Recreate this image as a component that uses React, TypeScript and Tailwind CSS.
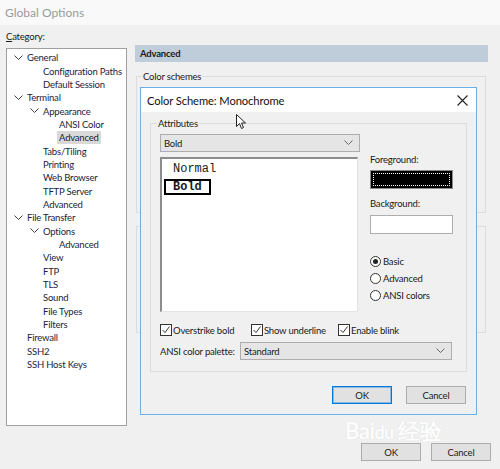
import React from "react";

type Item = { label: string; level: 0 | 1 | 2; exp?: boolean; sel?: boolean };

const tree: Item[] = [
  { label: "General", level: 0, exp: true },
  { label: "Configuration Paths", level: 1 },
  { label: "Default Session", level: 1 },
  { label: "Terminal", level: 0, exp: true },
  { label: "Appearance", level: 1, exp: true },
  { label: "ANSI Color", level: 2 },
  { label: "Advanced", level: 2, sel: true },
  { label: "Tabs/Tiling", level: 1 },
  { label: "Printing", level: 1 },
  { label: "Web Browser", level: 1 },
  { label: "TFTP Server", level: 1 },
  { label: "Advanced", level: 1 },
  { label: "File Transfer", level: 0, exp: true },
  { label: "Options", level: 1, exp: true },
  { label: "Advanced", level: 2 },
  { label: "View", level: 1 },
  { label: "FTP", level: 1 },
  { label: "TLS", level: 1 },
  { label: "Sound", level: 1 },
  { label: "File Types", level: 1 },
  { label: "Filters", level: 1 },
  { label: "Firewall", level: 0 },
  { label: "SSH2", level: 0 },
  { label: "SSH Host Keys", level: 0 },
];

const indent = ["pl-[7px]", "pl-[23px]", "pl-[39px]"];

function Chevron({ className = "", color = "#444" }: { className?: string; color?: string }) {
  return (
    <svg width="9" height="6" viewBox="0 0 9 6" className={`shrink-0 ${className}`}>
      <polyline points="0.5,0.5 4.5,4.5 8.5,0.5" fill="none" stroke={color} strokeWidth="1" />
    </svg>
  );
}

function Check({ label }: { label: string }) {
  return (
    <div className="flex items-center gap-[1px] whitespace-nowrap">
      <div className="w-[12px] h-[12px] shrink-0 bg-white border border-[#333] flex items-center justify-center">
        <svg width="10" height="10" viewBox="0 0 10 10">
          <polyline points="1.5,5 4,7.5 8.5,1.5" fill="none" stroke="#333" strokeWidth="1" />
        </svg>
      </div>
      <span>{label}</span>
    </div>
  );
}

function Radio({ label, on }: { label: string; on?: boolean }) {
  return (
    <div className="flex items-center gap-[2px] h-[17px] whitespace-nowrap">
      <div className="w-[11px] h-[11px] shrink-0 rounded-full border border-[#333] bg-white flex items-center justify-center">
        {on && <div className="w-[5px] h-[5px] rounded-full bg-[#222]" />}
      </div>
      <span>{label}</span>
    </div>
  );
}

function Select({ value, className = "" }: { value: string; className?: string }) {
  return (
    <div className={`h-[18px] bg-[#e5e5e5] border border-[#adadad] flex items-center justify-between pl-[3px] pr-[6px] ${className}`}>
      <span>{value}</span>
      <Chevron color="#666" />
    </div>
  );
}

function Btn({ label, primary }: { label: string; primary?: boolean }) {
  return (
    <div
      className={`w-[60px] h-[18px] flex items-center justify-center bg-[#e1e1e1] border ${
        primary ? "border-[#0078d7] shadow-[inset_0_0_0_1px_#8ab9e6]" : "border-[#adadad]"
      }`}
    >
      {label}
    </div>
  );
}

export default function App() {
  return (
    <div
      className="relative w-[500px] h-[469px] overflow-hidden bg-[#f0f0f0] text-[9.5px] tracking-[-0.2px] leading-[13px] text-[#1a1a1a] whitespace-nowrap"
      style={{ fontFamily: 'Lato, "Liberation Sans", sans-serif' }}
    >
      {/* title bar */}
      <div className="h-[25px] bg-[#f9f9f9] pl-[5px] flex items-center text-[12px] tracking-normal text-[#9b9b9b]">Global Options</div>

      <div className="flex pl-[6px] pr-[12px]">
        {/* left column */}
        <div className="w-[121px] flex flex-col">
          <div className="h-[23px] flex items-center">
            <span>
              <span className="underline">C</span>ategory:
            </span>
          </div>
          <div className="h-[378px] bg-white border border-[#a0a0a0] pt-[2px] text-[#1c1c3a]">
            {tree.map((it, i) => (
              <div key={i} className={`h-[13.35px] flex items-center ${indent[it.level]}`}>
                <div className="w-[13px] shrink-0 flex items-center">{it.exp && <Chevron />}</div>
                <span className={it.sel ? "-ml-[2px] px-[2px] bg-[#d9d9d9]" : ""}>{it.label}</span>
              </div>
            ))}
          </div>
        </div>

        {/* right column */}
        <div className="ml-[8px] w-[353px] pt-[20px] flex flex-col">
          <div className="h-[17px] bg-[#bfcddb] flex items-center pl-[5px] font-bold">Advanced</div>
          <fieldset className="mt-[8px] ml-[1px] w-[350px] h-[143px] border border-[#dcdcdc]">
            <legend className="ml-[5px] px-[1px]">Color schemes</legend>
          </fieldset>
          <fieldset className="mt-[13px] ml-[1px] w-[350px] h-[107px] border border-[#dcdcdc]" />
        </div>
      </div>

      {/* bottom buttons */}
      <div className="flex justify-end gap-[10px] pr-[9px] mt-[17px]">
        <Btn label="OK" />
        <Btn label="Cancel" />
      </div>

      {/* watermark */}
      <div className="absolute left-[345px] top-[418px] text-[22px] leading-[26px] font-bold text-white opacity-90 tracking-tight [text-shadow:0_0_1px_#d0d0d0]">
        Bai<span className="text-[18px]">du</span> 经验
      </div>

      {/* modal dialog */}
      <div className="absolute left-[140px] top-[87px] w-[337px] h-[328px] border border-[#6aaeea] bg-[#f0f0f0] flex flex-col">
        <div className="h-[24px] bg-white flex items-center justify-between pl-[6px] pr-[8px] text-[11.2px] tracking-[-0.1px] text-[#111]">
          <span>Color Scheme: Monochrome</span>
          <svg width="11" height="11" viewBox="0 0 11 11">
            <path d="M0.5 0.5 L10.5 10.5 M10.5 0.5 L0.5 10.5" stroke="#222" strokeWidth="1.1" />
          </svg>
        </div>
        <div className="px-[9px] pt-[5px]">
          <fieldset className="w-[317px] h-[255px] border border-[#dcdcdc] px-[9px]">
            <legend className="ml-[-3px] px-[1px]">Attributes</legend>
            <div className="flex gap-[10px] mt-[4px]">
              <div className="w-[200px] flex flex-col">
                <Select value="Bold" className="w-[200px]" />
                <div className="mt-[5px] w-[198px] h-[155px] bg-white border-t-2 border-l-2 border-[#8c8c8c] border-r border-b border-r-[#e3e3e3] border-b-[#e3e3e3] pt-[3px] text-[12px] leading-[15px] tracking-normal" style={{ fontFamily: '"Liberation Mono", monospace' }}>
                  <div className="pl-[11px] text-[#222]">Normal</div>
                  <div className="ml-[2px] mt-[2px] w-[47px] h-[16px] border-2 border-black flex items-center pl-[7px] font-bold">Bold</div>
                </div>
              </div>
              <div className="w-[83px] flex flex-col pt-[19px]">
                <div>Foreground:</div>
                <div className="mt-[4px] h-[19px] bg-black border border-[#8a8a8a] p-[2px]">
                  <div className="w-full h-full border border-dotted border-white" />
                </div>
                <div className="mt-[8px]">Background:</div>
                <div className="mt-[5px] h-[19px] bg-white border border-[#adadad]" />
                <div className="mt-[19px] flex flex-col">
                  <Radio label="Basic" on />
                  <Radio label="Advanced" />
                  <Radio label="ANSI colors" />
                </div>
              </div>
            </div>
            <div className="flex mt-[11px] h-[14px] items-center">
              <div className="w-[91px]"><Check label="Overstrike bold" /></div>
              <div className="w-[87px]"><Check label="Show underline" /></div>
              <Check label="Enable blink" />
            </div>
            <div className="flex items-center mt-[5px]">
              <span className="w-[80px]">ANSI color palette:</span>
              <Select value="Standard" className="w-[212px]" />
            </div>
          </fieldset>
        </div>
        <div className="flex justify-end gap-[14px] pr-[10px] mt-[14px]">
          <Btn label="OK" primary />
          <Btn label="Cancel" />
        </div>
      </div>

      {/* mouse cursor */}
      <svg className="absolute left-[236px] top-[114px]" width="10" height="16" viewBox="0 0 10 16">
        <path d="M0.5 0.5 L0.5 12.5 L3.5 9.5 L5.5 14.5 L7.5 13.5 L5.5 9 L9.5 9 Z" fill="white" stroke="#222" strokeWidth="1" strokeLinejoin="round" />
      </svg>
    </div>
  );
}
